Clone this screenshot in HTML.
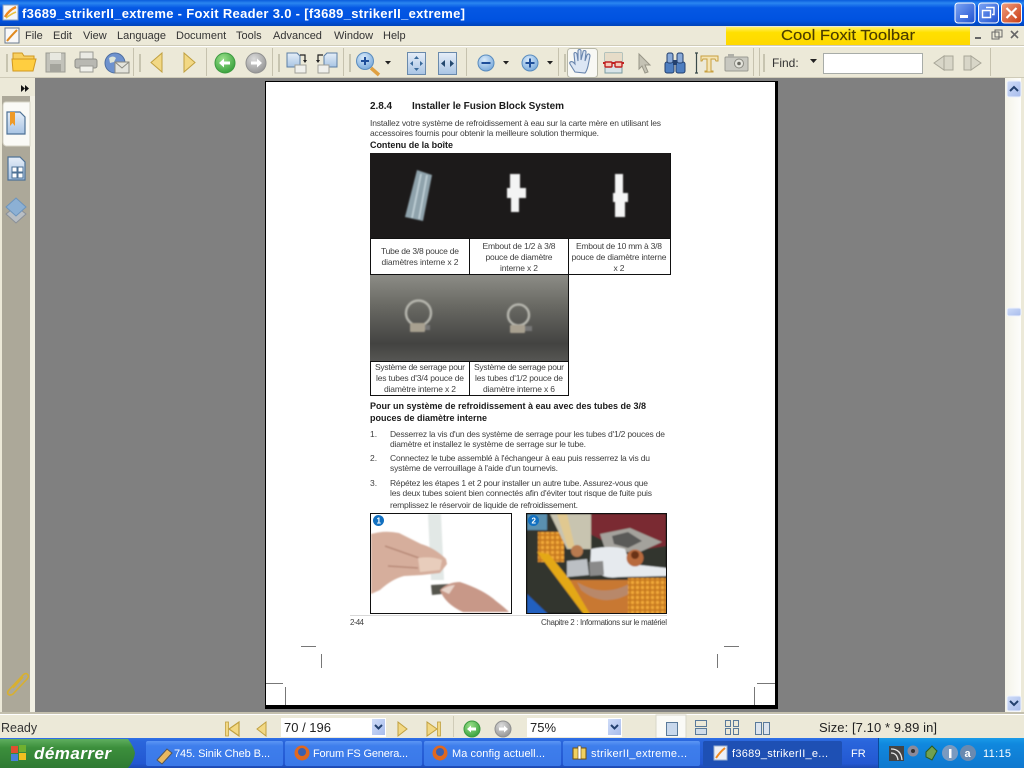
<!DOCTYPE html>
<html><head><meta charset="utf-8"><title>Foxit Reader</title>
<style>
html,body{margin:0;padding:0;width:1024px;height:768px;overflow:hidden;background:#808080}
svg{display:block}
text{font-family:"Liberation Sans",sans-serif;white-space:pre}
.m{font-size:11px;fill:#333}
.p{font-size:8.5px;fill:#3f3f3f}
.b{font-size:10px;font-weight:bold;fill:#1a1a1a}
.h{font-size:9px;font-weight:bold;fill:#1a1a1a}
.t{font-size:11px;fill:#fff}
.s{font-size:13px;fill:#333}
</style></head><body>
<svg width="1024" height="768" viewBox="0 0 1024 768" xmlns="http://www.w3.org/2000/svg">
<defs>
<linearGradient id="tb" x1="0" y1="0" x2="0" y2="1"><stop offset="0" stop-color="#0A5CDC"/><stop offset=".12" stop-color="#2a86f0"/><stop offset=".3" stop-color="#0558E4"/><stop offset=".8" stop-color="#0052E0"/><stop offset="1" stop-color="#0043B8"/></linearGradient>
<linearGradient id="yl" x1="0" y1="0" x2="0" y2="1"><stop offset="0" stop-color="#FFF06A"/><stop offset=".3" stop-color="#FFE000"/><stop offset="1" stop-color="#FFD800"/></linearGradient>
<linearGradient id="bb" x1="0" y1="0" x2="1" y2="1"><stop offset="0" stop-color="#7EA6F4"/><stop offset="1" stop-color="#1E50D0"/></linearGradient>
<linearGradient id="rb" x1="0" y1="0" x2="1" y2="1"><stop offset="0" stop-color="#F0A080"/><stop offset="1" stop-color="#C83A12"/></linearGradient>
<linearGradient id="tk" x1="0" y1="0" x2="0" y2="1"><stop offset="0" stop-color="#2F6FE8"/><stop offset=".1" stop-color="#2a66dc"/><stop offset=".85" stop-color="#2358D2"/><stop offset="1" stop-color="#1C48B0"/></linearGradient>
<linearGradient id="st" x1="0" y1="0" x2="0" y2="1"><stop offset="0" stop-color="#5FAE5F"/><stop offset=".3" stop-color="#3C8F3C"/><stop offset="1" stop-color="#2F7A33"/></linearGradient>
<linearGradient id="tr" x1="0" y1="0" x2="0" y2="1"><stop offset="0" stop-color="#1A9BE8"/><stop offset=".2" stop-color="#1088DE"/><stop offset="1" stop-color="#0F78CF"/></linearGradient>
<linearGradient id="tbtn" x1="0" y1="0" x2="0" y2="1"><stop offset="0" stop-color="#5C96F4"/><stop offset=".2" stop-color="#3E7EEC"/><stop offset="1" stop-color="#3A78E8"/></linearGradient>
<linearGradient id="sc" x1="0" y1="0" x2="1" y2="0"><stop offset="0" stop-color="#F4F3E8"/><stop offset="1" stop-color="#FFFFFF"/></linearGradient>
<linearGradient id="bl" x1="0" y1="0" x2="0" y2="1"><stop offset="0" stop-color="#E6EEF8"/><stop offset="1" stop-color="#A8C4E4"/></linearGradient>
<linearGradient id="sb" x1="0" y1="0" x2="1" y2="1"><stop offset="0" stop-color="#CFDCF8"/><stop offset="1" stop-color="#A8BCEC"/></linearGradient>
<radialGradient id="grn" cx=".4" cy=".3" r=".8"><stop offset="0" stop-color="#9AE08A"/><stop offset="1" stop-color="#2E9A34"/></radialGradient>
<radialGradient id="gry" cx=".4" cy=".3" r=".8"><stop offset="0" stop-color="#DCDCDC"/><stop offset="1" stop-color="#8E8E8E"/></radialGradient>
<radialGradient id="blu" cx=".4" cy=".3" r=".8"><stop offset="0" stop-color="#D8EAFA"/><stop offset="1" stop-color="#6EA2D8"/></radialGradient>
<linearGradient id="ph2" x1="0" y1="0" x2="0" y2="1"><stop offset="0" stop-color="#8C8C86"/><stop offset=".35" stop-color="#6A6A64"/><stop offset=".8" stop-color="#434341"/><stop offset="1" stop-color="#565653"/></linearGradient>
<pattern id="pins" width="5" height="5" patternUnits="userSpaceOnUse"><rect width="5" height="5" fill="#C87A20"/><circle cx="2.500" cy="2.500" r="1.700" fill="#F0A838"/></pattern>
<filter id="bl1" x="-10%" y="-10%" width="120%" height="120%"><feGaussianBlur stdDeviation=".7"/></filter>
<clipPath id="c1"><rect x="371" y="514" width="140" height="99"/></clipPath>
<clipPath id="c2"><rect x="527" y="514" width="139" height="99"/></clipPath>
</defs>

<rect width="1024" height="768" fill="#ECE9D8"/>
<rect width="1024" height="26" fill="url(#tb)"/>
<rect x="3" y="5" width="15" height="15" fill="#F4F6FA" stroke="#8AA0C0"/>
<path d="M5 17 Q9 10 16 7" stroke="#F08A20" stroke-width="2.500" fill="none"/>
<path d="M6 18 Q11 14 16 12" stroke="#E8C040" stroke-width="1.500" fill="none"/>
<text x="22" y="18" font-size="13" font-weight="bold" fill="#fff" textLength="443" lengthAdjust="spacing">f3689_strikerII_extreme - Foxit Reader 3.0 - [f3689_strikerII_extreme]</text>
<rect x="955" y="3" width="20" height="20" rx="3" fill="url(#bb)" stroke="#fff"/><rect x="960" y="15" width="8" height="3" fill="#fff"/>
<rect x="978.500" y="3" width="20" height="20" rx="3" fill="url(#bb)" stroke="#fff"/><path d="M986 7.500h8v7h-2M982.500 10.500h8v7h-8z" stroke="#fff" stroke-width="1.400" fill="none"/>
<rect x="1001.500" y="3" width="20" height="20" rx="3" fill="url(#rb)" stroke="#fff"/><path d="M1006.500 8l10 10M1016.500 8l-10 10" stroke="#fff" stroke-width="2.200"/>

<rect x="5" y="28" width="14" height="15" fill="#F8F8F8" stroke="#6A7A90"/>
<path d="M7 41 Q11 36 17 30" stroke="#E08A20" stroke-width="2" fill="none"/>
<text class="m" x="25" y="39">File</text><text class="m" x="53" y="39">Edit</text><text class="m" x="83" y="39">View</text><text class="m" x="117" y="39">Language</text><text class="m" x="176" y="39">Document</text><text class="m" x="236" y="39">Tools</text><text class="m" x="273" y="39">Advanced</text><text class="m" x="334" y="39">Window</text><text class="m" x="383" y="39">Help</text>
<rect x="726" y="27" width="244" height="18" fill="url(#yl)"/>
<text x="781" y="40" font-size="15" fill="#4a3c00" stroke="#4a3c00" stroke-width=".15" textLength="134" lengthAdjust="spacingAndGlyphs">Cool Foxit Toolbar</text>
<rect x="975" y="37" width="6" height="2" fill="#666"/>
<rect x="992" y="32" width="7" height="7" fill="none" stroke="#666"/><rect x="995" y="30" width="7" height="7" fill="none" stroke="#666"/>
<path d="M1011 31l7 7M1018 31l-7 7" stroke="#666" stroke-width="1.600"/>
<rect y="45" width="1024" height="1" fill="#CFCBB8"/>
<rect y="46" width="1024" height="1" fill="#fff"/>

<rect y="47" width="1024" height="31" fill="#ECE9D8"/>
<rect y="77" width="1024" height="1" fill="#CFCBB8"/>
<g fill="#B8B4A0"><rect x="6" y="54" width="2" height="18" opacity=".7"/><rect x="139" y="54" width="2" height="18" opacity=".7"/><rect x="278" y="54" width="2" height="18" opacity=".7"/><rect x="349" y="54" width="2" height="18" opacity=".7"/><rect x="564" y="54" width="2" height="18" opacity=".7"/><rect x="763" y="54" width="2" height="18" opacity=".7"/></g>
<g fill="#C6C2AE"><rect x="133" y="48" width="1" height="28"/><rect x="206" y="48" width="1" height="28"/><rect x="272" y="48" width="1" height="28"/><rect x="343" y="48" width="1" height="28"/><rect x="466" y="48" width="1" height="28"/><rect x="558" y="48" width="1" height="28"/><rect x="753" y="48" width="1" height="28"/><rect x="759" y="48" width="1" height="28"/><rect x="990" y="48" width="1" height="28"/></g>
<path d="M13 53h9l2 3h10v3h-21z" fill="#F8D060" stroke="#D09820"/>
<path d="M13 71l-1-12h24l-3 12z" fill="#FFCE40" stroke="#D09820"/>
<rect x="46" y="53" width="19" height="19" fill="#C2C2BA" stroke="#9A9A92"/><rect x="50" y="53" width="11" height="7" fill="#E8E8E0"/><rect x="50" y="64" width="11" height="8" fill="#A4A49C"/>
<rect x="80" y="52" width="13" height="7" fill="#EAEAE4" stroke="#9A9A94"/><rect x="75" y="59" width="22" height="9" rx="2" fill="#B8B8B2" stroke="#8E8E88"/><rect x="80" y="66" width="13" height="6" fill="#F0F0EA" stroke="#9A9A94"/>
<circle cx="115" cy="63" r="10" fill="#6E92CE" stroke="#4E6EA0"/><path d="M109 58q4-3 7 0l-2 4-4 1zM116 66l4-1 2 3-4 3z" fill="#DDE4D8"/><rect x="115" y="62" width="14" height="11" fill="#E4E4DC" stroke="#8A8A82"/><path d="M115 62l7 6 7-6" stroke="#8A8A82" fill="none"/>
<path d="M162 53v19l-11-9.500z" fill="#F2D884" stroke="#C0A040"/>
<path d="M184 53v19l11-9.500z" fill="#F2D884" stroke="#C0A040"/>
<circle cx="225" cy="63" r="10" fill="url(#grn)" stroke="#3C9A40"/><path d="M219 63l5-4.500v3h6v3h-6v3z" fill="#fff"/>
<circle cx="256" cy="63" r="10" fill="url(#gry)" stroke="#909090"/><path d="M262 63l-5-4.500v3h-6v3h6v3z" fill="#fff"/>
<path d="M287 53h10l3 3v11h-13z" fill="url(#bl)" stroke="#5C7EA4"/><path d="M295 65h11v8h-11z" fill="#F0F0EC" stroke="#A0A098"/><path d="M300 55h5v6" stroke="#222" fill="none" stroke-width="1.200"/><path d="M303 60h4l-2 3z" fill="#222"/>
<path d="M327 53h10v14h-13v-11z" fill="url(#bl)" stroke="#5C7EA4"/><path d="M318 65h11v8h-11z" fill="#F0F0EC" stroke="#A0A098"/><path d="M323 55h-5v6" stroke="#222" fill="none" stroke-width="1.200"/><path d="M316 60h4l-2 3z" fill="#222"/>
<path d="M371 68l8 7" stroke="#E0A040" stroke-width="3.500"/>
<circle cx="365" cy="61" r="8.500" fill="url(#blu)" stroke="#5A8CBE"/><path d="M361 61h8M365 57v8" stroke="#1E4E9A" stroke-width="2"/>
<path d="M385 61h6l-3 3.500z" fill="#222"/>
<rect x="407.500" y="52.500" width="18" height="22" fill="url(#bl)" stroke="#6A8AAC"/><path d="M416.500 56l2.500 3h-5zM416.500 71l2.500-3h-5zM410 63.500l3-2.500v5zM423 63.500l-3-2.500v5z" fill="#3A6A9A"/>
<rect x="438.500" y="52.500" width="18" height="22" fill="url(#bl)" stroke="#6A8AAC"/><path d="M441 63.500l4-3.500v7zM454 63.500l-4-3.500v7z" fill="#23486E"/>
<circle cx="486" cy="63" r="8" fill="url(#blu)" stroke="#5A8CBE"/><path d="M481.500 63h9" stroke="#1E4E9A" stroke-width="2"/>
<path d="M503 61h6l-3 3.500z" fill="#222"/>
<circle cx="530" cy="63" r="8" fill="url(#blu)" stroke="#5A8CBE"/><path d="M525.500 63h9M530 58.500v9" stroke="#1E4E9A" stroke-width="2"/>
<path d="M547 61h6l-3 3.500z" fill="#222"/>
<rect x="567.500" y="48.500" width="30" height="29" rx="3" fill="#F8F8F4" stroke="#B8B8A8"/>
<path d="M575 72l-5-8c-1-2 1-3 3-2l2 2-1-10c0-2 2-2 3 0l1 7 0-10c0-2 3-2 3 0l0 9 2-8c0-2 3-2 3 0l-1 9 2-6c1-2 3-1 3 1l-2 10c-1 4-2 6-3 7z" fill="#DCE6F4" stroke="#6A86AE" stroke-width="1.100"/>
<rect x="605" y="53" width="17" height="20" fill="#D8E4E8" stroke="#7A9AA0"/><rect x="605" y="53" width="17" height="8" fill="#E6DCC8"/>
<path d="M603 63h21" stroke="#C02020" stroke-width="2"/><rect x="605" y="62" width="7" height="5" rx="1" fill="#F6C8B8" stroke="#C02020" stroke-width="1.400"/><rect x="615" y="62" width="7" height="5" rx="1" fill="#F6C8B8" stroke="#C02020" stroke-width="1.400"/>
<path d="M639 54v15l3-3 3 7 3-1-3-7h5z" fill="#C4C2B4" stroke="#989688"/>
<rect x="665" y="62" width="9" height="11" rx="2" fill="#4E7EC0" stroke="#23406E"/><rect x="676" y="62" width="9" height="11" rx="2" fill="#4E7EC0" stroke="#23406E"/><rect x="667" y="53" width="6" height="10" rx="2" fill="#8AAAD8" stroke="#23406E"/><rect x="677" y="53" width="6" height="10" rx="2" fill="#8AAAD8" stroke="#23406E"/><rect x="673" y="60" width="4" height="5" fill="#23406E"/>
<path d="M695 53h3M695 73h3M696.500 53v20" stroke="#3A4A4A" stroke-width="1.200" fill="none"/>
<path d="M701 56h17v5h-2l-1-2h-4v12h2v1h-8v-1h2v-12h-4l-1 2h-1z" fill="#F4E4B4" stroke="#C8A040"/>
<rect x="725" y="57" width="23" height="14" rx="1" fill="#C8C8C0" stroke="#9A9A92"/><rect x="728" y="54" width="6" height="3" fill="#B0B0A8"/><circle cx="739" cy="63.500" r="4.500" fill="#E4E4DC" stroke="#8A8A82"/><circle cx="739" cy="63.500" r="1.800" fill="#6A6A62"/>
<text class="m" x="772" y="67" style="font-size:12px">Find:</text>
<path d="M810 59h7l-3.500 4z" fill="#222"/>
<rect x="823.500" y="53.500" width="99" height="20" fill="#fff" stroke="#A8ACA8"/>
<path d="M934 63l10-7v14zM944 56h9v14h-9z" fill="#D8D6C8" stroke="#A8A698"/>
<path d="M981 63l-10-7v14zM971 56h-7v14h7z" fill="#D8D6C8" stroke="#A8A698"/>

<rect x="35" y="78" width="970" height="634" fill="#808080"/>
<rect y="78" width="35" height="636" fill="#ECE9D8"/>
<rect x="2" y="96" width="28" height="618" fill="#ACA899"/>
<rect x="30" y="78" width="5" height="636" fill="#F2F0E4"/>
<rect x="0" y="78" width="35" height="18" fill="#ECE9D8"/>
<path d="M21 85l4 3.500-4 3.500zM25 85l4 3.500-4 3.500z" fill="#111"/>
<path d="M6 102h24v44H6q-3-1-3-4v-36q0-4 3-4z" fill="#FAFAF6" stroke="#D8D6C8"/>
<path d="M7 112h13l5 5v17H7z" fill="url(#bl)" stroke="#4E7296" stroke-width="1.200"/>
<path d="M10 112h5v14l-2.500-3-2.500 3z" fill="#EE9A28"/>
<path d="M8 157h12l5 5v18H8z" fill="url(#bl)" stroke="#4E7296" stroke-width="1.200"/>
<path d="M12 167h5v5h-5zM18 167h5v5h-5zM12 173h5v5h-5zM18 173h5v5h-5z" fill="#fff" stroke="#4E7296"/>
<path d="M6 214l10-8 10 8-10 9z" fill="#B8BEC4" stroke="#8A9098"/>
<path d="M6 207l10-9 10 9-10 9z" fill="#8CB0D4" stroke="#6C94BC"/>
<path d="M9 690l14-15q3-3 5 0 1 2-1 4l-14 15q-3 2-5 0-1-2 1-4zM13 688l10-11" fill="none" stroke="#D8B030" stroke-width="1.600"/>

<rect x="1005" y="78" width="19" height="636" fill="url(#sc)"/>
<rect x="1021" y="78" width="3" height="636" fill="#ECE9D8"/>
<rect x="1007" y="81" width="14" height="16" rx="2" fill="url(#sb)" stroke="#EEF2FC"/><path d="M1010 91l4-4 4 4" stroke="#23406E" stroke-width="2" fill="none"/>
<rect x="1007" y="696" width="14" height="15" rx="2" fill="url(#sb)" stroke="#EEF2FC"/><path d="M1010 701l4 4 4-4" stroke="#23406E" stroke-width="2" fill="none"/>
<rect x="1007" y="308" width="14" height="8" rx="2" fill="url(#sb)" stroke="#EEF2FC"/>

<rect x="265" y="81" width="513" height="628" fill="#000"/>
<rect x="266" y="82" width="509" height="623" fill="#fff"/>

<text class="b" x="370" y="109" textLength="22" lengthAdjust="spacing">2.8.4</text>
<text class="b" x="412" y="109" textLength="152" lengthAdjust="spacing">Installer le Fusion Block System</text>
<text class="p" x="370" y="126" textLength="291" lengthAdjust="spacing">Installez votre système de refroidissement à eau sur la carte mère en utilisant les</text>
<text class="p" x="370" y="136" textLength="229" lengthAdjust="spacing">accessoires fournis pour obtenir la meilleure solution thermique.</text>
<text class="h" x="370" y="148" textLength="83" lengthAdjust="spacing">Contenu de la boîte</text>

<rect x="370" y="153" width="301" height="85" fill="#1C1A1A"/>
<rect x="370" y="238" width="301" height="36" fill="#fff"/>
<rect x="370" y="275" width="99" height="86" fill="url(#ph2)"/>
<rect x="469" y="275" width="99" height="86" fill="url(#ph2)"/>
<g filter="url(#bl1)">
<path d="M417 170l15 5-9 46-18-4z" fill="#8FA3AC"/><path d="M421 174l-9 44M427 175l-8 44" stroke="#C4D4DA" stroke-width="1.500"/>
<path d="M510 174h10v14h6v10h-7v14h-8v-14h-4v-10h3z" fill="#F4F4F4"/>
<path d="M615 174h8v19h5v9h-3v15h-10v-15h-2v-9h2z" fill="#F4F4F4"/>
<circle cx="418.500" cy="313" r="12.500" fill="none" stroke="#B4B4AC" stroke-width="2.500"/>
<rect x="410" y="323" width="15" height="9" rx="1" fill="#A8A090"/><rect x="425" y="325" width="5" height="5" fill="#777"/>
<circle cx="518.500" cy="315" r="10.500" fill="none" stroke="#B4B4AC" stroke-width="2.500"/>
<rect x="510" y="325" width="15" height="8" rx="1" fill="#A8A090"/><rect x="525" y="326" width="7" height="5" fill="#777"/>
</g>
<rect x="370" y="361" width="198" height="35" fill="#fff"/>
<g fill="#111">
<rect x="370" y="238" width="301" height="1"/><rect x="370" y="274" width="301" height="1"/>
<rect x="370" y="238" width="1" height="37"/><rect x="370" y="361" width="1" height="35"/><rect x="469" y="238" width="1" height="37"/><rect x="469" y="361" width="1" height="35"/><rect x="568" y="238" width="1" height="158"/><rect x="670" y="153" width="1" height="122"/>
<rect x="370" y="395" width="198" height="1"/><rect x="370" y="361" width="198" height="1"/>
</g>

<g text-anchor="middle">
<text class="p" x="420" y="254" textLength="78" lengthAdjust="spacing">Tube de 3/8 pouce de</text>
<text class="p" x="420" y="265" textLength="77" lengthAdjust="spacing">diamètres interne x 2</text>
<text class="p" x="519" y="249" textLength="73" lengthAdjust="spacing">Embout de 1/2 à 3/8</text>
<text class="p" x="519" y="260" textLength="67" lengthAdjust="spacing">pouce de diamètre</text>
<text class="p" x="519" y="271" textLength="38" lengthAdjust="spacing">interne x 2</text>
<text class="p" x="619" y="249" textLength="86" lengthAdjust="spacing">Embout de 10 mm à 3/8</text>
<text class="p" x="619" y="260" textLength="95" lengthAdjust="spacing">pouce de diamètre interne</text>
<text class="p" x="619" y="271" textLength="11" lengthAdjust="spacing">x 2</text>
<text class="p" x="420" y="370" textLength="90" lengthAdjust="spacing">Système de serrage pour</text>
<text class="p" x="420" y="381" textLength="88" lengthAdjust="spacing">les tubes d'3/4 pouce de</text>
<text class="p" x="420" y="392" textLength="72" lengthAdjust="spacing">diamètre interne x 2</text>
<text class="p" x="519" y="370" textLength="90" lengthAdjust="spacing">Système de serrage pour</text>
<text class="p" x="519" y="381" textLength="88" lengthAdjust="spacing">les tubes d'1/2 pouce de</text>
<text class="p" x="519" y="392" textLength="72" lengthAdjust="spacing">diamètre interne x 6</text>
</g>

<text class="h" x="370" y="409" textLength="276" lengthAdjust="spacing">Pour un système de refroidissement à eau avec des tubes de 3/8</text>
<text class="h" x="370" y="421" textLength="117" lengthAdjust="spacing">pouces de diamètre interne</text>
<text class="p" x="370" y="437">1.</text>
<text class="p" x="390" y="437" textLength="275" lengthAdjust="spacing">Desserrez la vis d'un des système de serrage pour les tubes d'1/2 pouces de</text>
<text class="p" x="390" y="447" textLength="196" lengthAdjust="spacing">diamètre et installez le système de serrage sur le tube.</text>
<text class="p" x="370" y="461">2.</text>
<text class="p" x="390" y="461" textLength="260" lengthAdjust="spacing">Connectez le tube assemblé à l'échangeur à eau puis resserrez la vis du</text>
<text class="p" x="390" y="471" textLength="168" lengthAdjust="spacing">système de verrouillage à l'aide d'un tournevis.</text>
<text class="p" x="370" y="486">3.</text>
<text class="p" x="390" y="486" textLength="258" lengthAdjust="spacing">Répétez les étapes 1 et 2 pour installer un autre tube. Assurez-vous que</text>
<text class="p" x="390" y="496" textLength="262" lengthAdjust="spacing">les deux tubes soient bien connectés afin d'éviter tout risque de fuite puis</text>
<text class="p" x="390" y="508" textLength="188" lengthAdjust="spacing">remplissez le réservoir de liquide de refroidissement.</text>

<!-- photo 1 -->
<rect x="370.500" y="513.500" width="141" height="100" fill="#fff" stroke="#111"/>
<g clip-path="url(#c1)"><g filter="url(#bl1)">
<path d="M428 514h13l3 66h-13z" fill="#E2E8E6"/>
<path d="M371 534q14-4 28-1l22 11q14 4 25 15l1 5-7 9-18 2-18 1q-12 3-24 14l-9 4z" fill="#D6AE9C"/>
<path d="M385 546l34 12M388 566l30 2" stroke="#B88A78" stroke-width="1.500" fill="none"/>
<path d="M418 558q14-2 24 2l-2 10-20 2z" fill="#E8CDBC"/>
<path d="M431 585l18-1 2 9-19 2z" fill="#55554E"/>
<path d="M440 590q8-8 20-8 24 8 36 19 8 6 13 11h-46q-18-8-23-22z" fill="#C89888"/>
<path d="M441 590q8-5 14-5l-6 9z" fill="#E8D4CA"/>
</g></g>
<circle cx="378.500" cy="520.500" r="5.500" fill="#1270C0"/><text x="376.500" y="523.500" font-size="8" font-weight="bold" fill="#fff">1</text>
<!-- photo 2 -->
<rect x="526" y="513" width="141" height="101" fill="#111"/>
<g clip-path="url(#c2)"><g filter="url(#bl1)">
<rect x="527" y="514" width="139" height="99" fill="#30352F"/>
<path d="M585 514h81v32l-40 6-40-20z" fill="#7A2A30"/>
<path d="M600 534l30-6 32 14-22 10h-34z" fill="#A4A29C"/>
<path d="M612 536l16-4 14 9-14 7-14-4z" fill="#5A5A58"/>
<rect x="538" y="532" width="26" height="30" fill="url(#pins)"/>
<rect x="527" y="514" width="20" height="16" fill="#5A90B0"/>
<path d="M550 514h41v35h-24z" fill="#C8C4B0"/>
<path d="M557 514h10l8 34h-7z" fill="#E0C890"/>
<path d="M527 594l23 22h-23z" fill="#2060C0"/>
<path d="M537 552l12 2 50 62h-14z" fill="#E4A818"/>
<path d="M570 580h60v34h-40z" fill="#C87830"/>
<path d="M577 582q26 16 52 2v10q-26 14-48-4z" fill="#B8886A"/>
<rect x="628" y="578" width="39" height="36" fill="url(#pins)"/>
<path d="M591 549q20-4 34 0l5 15 37 4v8l-48 1q-14 2-20-4l-9-2z" fill="#E6EAEE"/>
<path d="M567 561l20-2 2 16-22 2z" fill="#BCC0C4"/>
<path d="M589 562l14-1 1 14-14 1z" fill="#8A8A8A"/>
<circle cx="635" cy="558" r="8.500" fill="#B86A3C"/><circle cx="635" cy="555" r="4" fill="#6A3018"/>
<circle cx="577" cy="551" r="6" fill="#B87A50"/>
</g></g>
<circle cx="533.500" cy="520.500" r="5.500" fill="#1270C0"/><text x="531.500" y="523.500" font-size="8" font-weight="bold" fill="#fff">2</text>

<rect x="350" y="615" width="317" height="1" fill="#D8D8D8"/>
<text class="p" x="350" y="625" style="font-size:8px" textLength="14" lengthAdjust="spacing">2-44</text>
<text class="p" x="541" y="625" style="font-size:8px" textLength="126" lengthAdjust="spacing">Chapitre 2 : Informations sur le matériel</text>

<g fill="#777">
<rect x="301" y="646" width="15" height="1"/><rect x="321" y="654" width="1" height="14"/>
<rect x="724" y="646" width="15" height="1"/><rect x="717" y="654" width="1" height="14"/>
<rect x="266" y="683" width="17" height="1"/><rect x="285" y="687" width="1" height="18"/>
<rect x="757" y="683" width="18" height="1"/><rect x="754" y="687" width="1" height="18"/>
</g>

<rect y="712" width="1024" height="26" fill="#ECE9D8"/>
<rect y="712" width="1024" height="2" fill="#C4C0AE"/>
<rect y="714" width="1024" height="1" fill="#fff"/>
<text class="s" x="1" y="732" style="font-size:12.500px">Ready</text>
<path d="M239 722v14l-10-7z" fill="#F2D884" stroke="#C0A040" stroke-width="1.200"/>
<rect x="225.500" y="722" width="3" height="14" fill="#F2D884" stroke="#C0A040" stroke-width=".8"/>
<path d="M266 722v14l-9-7z" fill="#F2D884" stroke="#C0A040"/>
<rect x="281" y="718" width="105" height="19" fill="#fff"/>
<text x="284" y="732" font-size="13" fill="#222">70 / 196</text>
<rect x="372" y="719" width="13" height="16" fill="url(#sb)"/><path d="M375 725l3.500 3.500 3.500-3.500" stroke="#23406E" stroke-width="2" fill="none"/>
<path d="M398 722v14l9-7z" fill="#F2D884" stroke="#C0A040"/>
<path d="M427 722v14l10-7z" fill="#F2D884" stroke="#C0A040"/><rect x="437.500" y="722" width="3" height="14" fill="#F2D884" stroke="#C0A040" stroke-width=".8"/>
<rect x="453" y="716" width="1" height="21" fill="#D0CCB8"/>
<circle cx="472" cy="729" r="8" fill="url(#grn)" stroke="#3C9A40"/><path d="M467 729l4-3.500v2h5v3h-5v2z" fill="#fff"/>
<circle cx="503" cy="729" r="8" fill="url(#gry)" stroke="#909090"/><path d="M508 729l-4-3.500v2h-5v3h5v2z" fill="#fff"/>
<rect x="527" y="718" width="95" height="19" fill="#fff"/>
<text x="530" y="732" font-size="13" fill="#222">75%</text>
<rect x="608" y="719" width="13" height="16" fill="url(#sb)"/><path d="M611 725l3.500 3.500 3.500-3.500" stroke="#23406E" stroke-width="2" fill="none"/>
<rect x="656" y="715" width="30" height="23" fill="#FAFAF6" stroke="#D8D6C8"/>
<rect x="666.500" y="722.500" width="11" height="13" fill="#C8D8EC" stroke="#5A7A9A"/>
<rect x="695.500" y="720.500" width="11" height="6" fill="none" stroke="#5A7A9A"/><rect x="695.500" y="728.500" width="11" height="6" fill="#D0DCE8" stroke="#5A7A9A"/>
<path d="M725.500 720.500h5v6h-5zM733.500 720.500h5v6h-5zM725.500 728.500h5v6h-5zM733.500 728.500h5v6h-5z" fill="none" stroke="#5A7A9A"/>
<path d="M755.500 722.500h6v12h-6zM763.500 722.500h6v12h-6z" fill="#DCE4EE" stroke="#5A7A9A"/>
<text x="819" y="732" font-size="13" fill="#222" textLength="118" lengthAdjust="spacing">Size: [7.10 * 9.89 in]</text>

<rect y="738" width="1024" height="30" fill="url(#tk)"/>
<path d="M0 739h128q6 8 7 14-1 8-7 15H0z" fill="url(#st)"/>
<rect x="11" y="746" width="7" height="7" fill="#E05030"/><rect x="19" y="745" width="7" height="7" fill="#70B030"/><rect x="11" y="754" width="7" height="7" fill="#4A80D8"/><rect x="19" y="753" width="7" height="7" fill="#F0C020"/>
<text x="34" y="759" font-size="17" font-weight="bold" font-style="italic" fill="#fff" textLength="77" lengthAdjust="spacing">démarrer</text>

<rect x="146" y="741" width="137" height="25" rx="2" fill="url(#tbtn)"/>
<rect x="285" y="741" width="137" height="25" rx="2" fill="url(#tbtn)"/>
<rect x="424" y="741" width="137" height="25" rx="2" fill="url(#tbtn)"/>
<rect x="563" y="741" width="137" height="25" rx="2" fill="url(#tbtn)"/>
<rect x="703" y="741" width="139" height="25" rx="2" fill="#1E50B4"/>
<path d="M157 760l10-11 5 4-10 11z" fill="#E8B860" stroke="#555"/>
<circle cx="302" cy="753" r="7.500" fill="#E06820"/><circle cx="302" cy="752" r="4" fill="#3A60B0"/>
<circle cx="440" cy="753" r="7.500" fill="#E06820"/><circle cx="440" cy="752" r="4" fill="#3A60B0"/>
<rect x="573" y="748" width="13" height="11" fill="#F0D060" stroke="#705010"/><rect x="578" y="746" width="3" height="13" fill="#fff" stroke="#705010" stroke-width=".6"/>
<rect x="714" y="746" width="13" height="14" fill="#EEF0F6" stroke="#9AB0D0"/><path d="M716 758q4-6 9-10" stroke="#F08A20" stroke-width="2" fill="none"/>
<text class="t" x="174" y="757" textLength="96" lengthAdjust="spacing">745. Sinik Cheb B...</text>
<text class="t" x="313" y="757" textLength="95" lengthAdjust="spacing">Forum FS Genera...</text>
<text class="t" x="452" y="757" textLength="93" lengthAdjust="spacing">Ma config actuell...</text>
<text class="t" x="591" y="757" textLength="96" lengthAdjust="spacing">strikerII_extreme...</text>
<text class="t" x="732" y="757" textLength="96" lengthAdjust="spacing">f3689_strikerII_e...</text>
<text class="t" x="851" y="757">FR</text>

<rect x="878" y="738" width="146" height="30" fill="url(#tr)"/>
<rect x="878" y="738" width="1" height="30" fill="#0A4A9A"/>
<rect x="889" y="746" width="15" height="15" fill="#444"/><path d="M891 749q10 0 11 11M891 753q6 0 7 7" stroke="#E8E8E8" fill="none" stroke-width="1.300"/>
<circle cx="913" cy="751" r="5.500" fill="#8A8A9A"/><circle cx="913" cy="751" r="2" fill="#333"/>
<path d="M926 752l6-6 5 5-5 9-6-3z" fill="#70A050" stroke="#2A5A20"/>
<circle cx="950" cy="753" r="8" fill="#7A9AC0"/><rect x="949" y="749" width="2.500" height="9" fill="#fff"/>
<circle cx="968" cy="753" r="8" fill="#6A8AB0"/><text x="964.500" y="757" font-size="11" font-weight="bold" fill="#fff">a</text>
<text class="t" x="983" y="757" textLength="28" lengthAdjust="spacing">11:15</text>
</svg>
</body></html>
